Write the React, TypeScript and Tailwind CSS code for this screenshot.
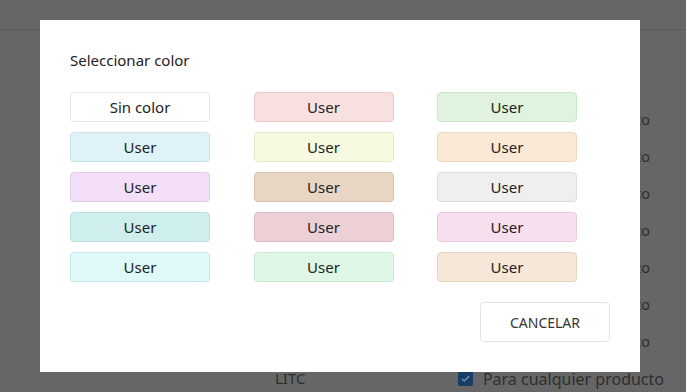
import React from 'react';

const swatches = [
    { label: 'Sin color', cls: 'bg-white border-[#e6e6e6]' },
    { label: 'User', cls: 'bg-[#f8dfe0] border-[#ecc9cb]' },
    { label: 'User', cls: 'bg-[#dff3df] border-[#cbe6cc]' },
    { label: 'User', cls: 'bg-[#dff2f8] border-[#c9e2ea]' },
    { label: 'User', cls: 'bg-[#f7f9e0] border-[#e6e9c9]' },
    { label: 'User', cls: 'bg-[#fae9d6] border-[#ecd8c2]' },
    { label: 'User', cls: 'bg-[#f3dff7] border-[#e3cbe8]' },
    { label: 'User', cls: 'bg-[#e8d5c4] border-[#d8c3b0]' },
    { label: 'User', cls: 'bg-[#efefef] border-[#dddddd]' },
    { label: 'User', cls: 'bg-[#cfeeee] border-[#bcdedf]' },
    { label: 'User', cls: 'bg-[#ecd0d6] border-[#dbbcc3]' },
    { label: 'User', cls: 'bg-[#f8dff0] border-[#e9cbe0]' },
    { label: 'User', cls: 'bg-[#dff8f9] border-[#cae6e8]' },
    { label: 'User', cls: 'bg-[#dff6e6] border-[#caead3]' },
    { label: 'User', cls: 'bg-[#f5e8d8] border-[#e5d6c3]' },
];

const App = () => {
    return (
        <div className="relative w-[686px] h-[392px] overflow-hidden bg-[#666666] font-['Noto_Sans',sans-serif] text-[#2e2e2e]">
            {/* Page behind the overlay */}
            <div className="h-[30px] border-b border-[#5c5c5c]" />
            <div className="pt-[71px] flex flex-col">
                {Array.from({ length: 7 }).map((_, i) => (
                    <div key={i} className="h-[37px] flex items-center justify-end pr-[36px] text-[15px]">
                        Producto
                    </div>
                ))}
                <div className="h-[37px] flex items-center text-[16px] pr-[22px]">
                    <span className="ml-[275px] text-[15px]">LITC</span>
                    <span className="ml-auto w-[15px] h-[15px] rounded-[2px] bg-[#173c66] flex items-center justify-center">
                        <svg width="11" height="11" viewBox="0 0 12 12" fill="none" stroke="#6d8aab" strokeWidth="1.6">
                            <path d="M2 6.2l2.6 2.6L10 3.4" />
                        </svg>
                    </span>
                    <span className="ml-[10px] whitespace-nowrap">Para cualquier producto</span>
                </div>
            </div>

            {/* Dialog */}
            <div className="absolute left-[40px] top-[20px] w-[600px] h-[352px] bg-white p-[30px] flex flex-col text-[#222]">
                <h2 className="text-[15px] leading-[20px]">Seleccionar color</h2>
                <div className="mt-[22px] grid grid-cols-[140px_140px_140px] gap-x-[43.5px] gap-y-[10px]">
                    {swatches.map((s, i) => (
                        <button
                            key={i}
                            className={`h-[30px] rounded-[4px] border text-[15px] flex items-center justify-center ${s.cls}`}
                        >
                            {s.label}
                        </button>
                    ))}
                </div>
                <div className="mt-[20px] flex justify-end">
                    <button className="w-[130px] h-[40px] rounded-[4px] border border-[#e3e3e3] bg-white text-[14px] text-[#333]">
                        CANCELAR
                    </button>
                </div>
            </div>
        </div>
    );
};

export default App;
